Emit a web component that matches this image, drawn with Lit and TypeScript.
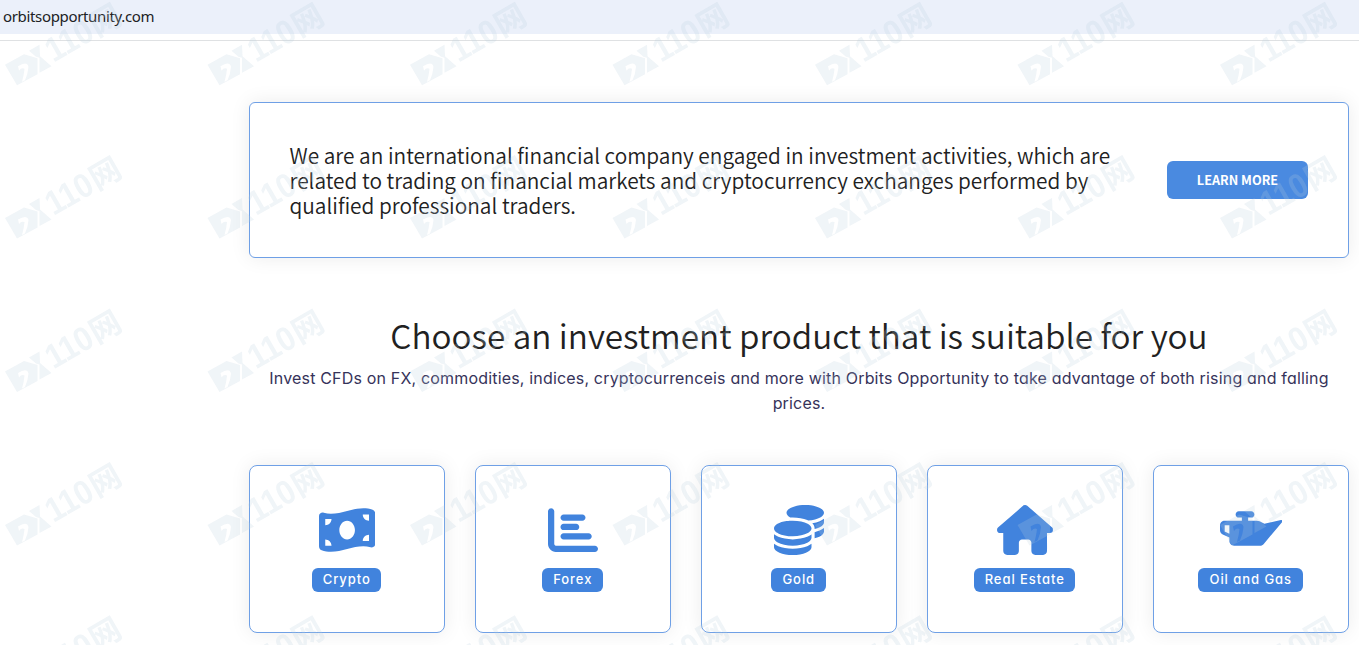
import { LitElement, css, html, svg } from 'lit';
import { customElement } from 'lit/decorators.js';

interface Product {
  label: string;
  width: number;
  path: string;
}

const products: Product[] = [
  {
    label: 'Crypto',
    width: 576,
    path: 'M0 112.5V422.3c0 18 10.1 35 27 41.3c87 32.5 174 10.3 261-11.9c79.8-20.3 159.6-40.7 239.3-18.9c23 6.3 48.7-9.5 48.7-33.4V89.7c0-18-10.1-35-27-41.3C462 15.9 375 38.1 288 60.3C208.2 80.6 128.4 100.9 48.7 79.1C25.6 72.8 0 88.6 0 112.5zM288 352c-44.2 0-80-43-80-96s35.8-96 80-96s80 43 80 96s-35.8 96-80 96zM64 352c35.3 0 64 28.7 64 64H64V352zm64-208c0 35.3-28.7 64-64 64V144h64zM512 304v64H448c0-35.3 28.7-64 64-64zM448 96h64v64c-35.3 0-64-28.7-64-64z',
  },
  {
    label: 'Forex',
    width: 512,
    path: 'M32 32c17.7 0 32 14.3 32 32V400c0 8.8 7.2 16 16 16H480c17.7 0 32 14.3 32 32s-14.3 32-32 32H80c-44.2 0-80-35.8-80-80V64C0 46.3 14.3 32 32 32zm96 96c0-17.7 14.3-32 32-32H352c17.7 0 32 14.3 32 32s-14.3 32-32 32H160c-17.7 0-32-14.3-32-32zm32 64H288c17.7 0 32 14.3 32 32s-14.3 32-32 32H160c-17.7 0-32-14.3-32-32s14.3-32 32-32zm0 96H416c17.7 0 32 14.3 32 32s-14.3 32-32 32H160c-17.7 0-32-14.3-32-32s14.3-32 32-32z',
  },
  {
    label: 'Gold',
    width: 512,
    path: 'M512 80c0 18-14.3 34.6-38.4 48c-29.1 16.1-72.5 27.5-122.3 30.9c-3.7-1.8-7.4-3.5-11.3-5C300.6 137.4 248.2 128 192 128c-8.3 0-16.4 .2-24.5 .6l-1.1-.6C142.3 114.6 128 98 128 80c0-44.2 86-80 192-80S512 35.8 512 80zM160.7 161.1c10.2-.7 20.7-1.1 31.3-1.1c62.2 0 117.4 12.3 152.5 31.4C369.3 204.9 384 221.7 384 240c0 4-.7 7.9-2.1 11.7c-4.6 13.2-17 25.3-35 35.5c-.4 .2-.9 .5-1.3 .7c-35 19.4-90.8 32-153.6 32c-59.6 0-112.9-11.3-148.2-29.1c-1.9-.9-3.7-1.9-5.5-2.9C14.3 274.6 0 258 0 240c0-34.8 53.4-64.5 128-75.4c10.5-1.5 21.4-2.7 32.7-3.5zM416 240c0-21.9-10.6-39.9-24.1-53.4c28.3-4.4 54.2-11.4 76.2-20.5c16.3-6.8 31.5-15.2 43.9-25.5V176c0 19.3-16.5 37.1-43.8 50.9c-14.6 7.4-32.4 13.7-52.4 18.5c.1-1.8 .2-3.5 .2-5.3zm-32 96c0 18-14.3 34.6-38.4 48c-1.8 1-3.6 1.9-5.5 2.9C304.9 404.7 251.6 416 192 416c-62.8 0-118.6-12.6-153.6-32C14.3 370.6 0 354 0 336V300.6c12.5 10.3 27.6 18.7 43.9 25.5C83.4 342.6 135.8 352 192 352s108.6-9.4 148.1-25.9c7.8-3.2 15.3-6.9 22.4-10.9c6.1-3.4 11.8-7.2 17.2-11.2c1.5-1.1 2.9-2.3 4.3-3.4V336zm32 0V278.1c19-4.2 36.5-9.5 52.1-16c16.3-6.8 31.5-15.2 43.9-25.5V272c0 10.5-5 21-14.9 30.9c-16.3 16.3-45 29.7-81.3 38.4c.1-1.7 .2-3.5 .2-5.3zM192 448c56.2 0 108.6-9.4 148.1-25.9c16.3-6.8 31.5-15.2 43.9-25.5V432c0 44.2-86 80-192 80S0 476.2 0 432V396.6c12.5 10.3 27.6 18.7 43.9 25.5C83.4 438.6 135.8 448 192 448z',
  },
  {
    label: 'Real Estate',
    width: 576,
    path: 'M575.8 255.5c0 18-15 32.1-32 32.1h-32l.7 160.2c0 2.7-.2 5.4-.5 8.1V472c0 22.1-17.9 40-40 40H392c-22.1 0-40-17.9-40-40V384c0-17.7-14.3-32-32-32H256c-17.7 0-32 14.3-32 32v88c0 22.1-17.9 40-40 40H104c-22.1 0-40-17.9-40-40V287.6H32c-18 0-32-14-32-32.1c0-9 3-17 10-24L266.4 8c7-7 15-8 22-8s15 2 21 7L564.8 231.5c8 7 12 15 11 24z',
  },
  {
    label: 'Oil and Gas',
    width: 640,
    path: 'M320 128c17.7 0 32-14.3 32-32s-14.3-32-32-32H192c-17.7 0-32 14.3-32 32s14.3 32 32 32h32v32H48c-26.5 0-48 21.5-48 48v50.7c0 19 11.2 36.2 28.5 43.9L96 332v36c0 26.5 21.5 48 48 48H410.5c14.5 0 28.3-6.6 37.4-17.9L636.6 174c9-11 1-22-12-19.8L454.9 190.8l-50-24.5c-8.9-4.4-18.7-6.3-28.6-6.3H288V128h32zM96 208v86.1L48 272.5V208h48z',
  },
];

const columns = [0, 1, 2, 3, 4, 5, 6];
const rows = [0, 1, 2, 3, 4];

@customElement('app-watermark')
export class AppWatermark extends LitElement {
  static styles = css`
    :host {
      display: block;
      inset: 0;
      pointer-events: none;
      position: absolute;
    }

    svg {
      display: block;
    }

    g {
      fill: rgb(184 205 220);
    }

    .sheet {
      opacity: 0.215;
    }

    .digits {
      font: 700 34px 'Liberation Sans', sans-serif;
    }

    .cjk {
      font: 700 31px 'Noto Sans CJK SC', sans-serif;
    }
  `;

  private mark(column: number, row: number) {
    return svg`
      <g transform="translate(${column * 202.5} ${row * 153.4 - 13.3})">
        <path
          d="M5 78 L24 67.5 L37.5 71.5 V87.5 L17 98.5 Z
            M18 79.5 Q27 74 28.5 80 Q28 87 25 93.5 L22 95 Q24 88 24.5 82 Q21.5 80.5 19 84 Z"
          fill-rule="evenodd"
        />
        <path d="M29 64 L39.5 58 L40 69.5 L51.5 79.5 L39.5 86 V71 L36 70 Z" />
        <g transform="translate(53.5 76) rotate(-30)">
          <text class="digits" transform="scale(0.9 1)">110</text>
          <text class="cjk" x="50.5" y="0">网</text>
        </g>
      </g>
    `;
  }

  render() {
    return html`
      <svg width="1359" height="645" viewBox="0 0 1359 645" aria-hidden="true">
        <g class="sheet">${rows.map((row) => columns.map((column) => this.mark(column, row)))}</g>
      </svg>
    `;
  }
}

@customElement('product-card')
export class ProductCard extends LitElement {
  static properties = {
    product: { attribute: false },
  };

  declare product: Product;

  static styles = css`
    :host {
      align-items: center;
      background: #fff;
      border: 1px solid #6fa0e6;
      border-radius: 8px;
      box-shadow: 0 0 20px rgb(0 0 0 / 8%);
      box-sizing: border-box;
      display: flex;
      flex-direction: column;
      gap: 13px;
      height: 168px;
      padding-top: 39px;
    }

    svg {
      display: block;
      fill: #4183dd;
      height: 50px;
    }

    .badge {
      background: #4183dd;
      border-radius: 6px;
      color: #fff;
      font: 500 13px/23px Inter, sans-serif;
      font-feature-settings: 'cv11';
      letter-spacing: 0.95px;
      margin-right: 1px;
      padding: 0 10.5px 1px 11px;
    }
  `;

  render() {
    return html`
      <svg viewBox="0 0 ${this.product.width} 512"><path d=${this.product.path} /></svg>
      <span class="badge">${this.product.label}</span>
    `;
  }
}

@customElement('app-root')
export class AppRoot extends LitElement {
  static styles = css`
    :host {
      background: #fff;
      display: block;
      height: 645px;
      overflow: hidden;
      position: relative;
    }

    .address {
      background: #ebf0fa;
      color: #202124;
      font: 15px/32px 'Noto Sans', sans-serif;
      height: 34px;
      letter-spacing: -0.34px;
      padding-left: 3px;
    }

    .rule {
      border-bottom: 1px solid #dfe1e3;
      height: 6px;
    }

    main {
      margin: 61px 10px 0 249px;
    }

    .banner {
      align-items: center;
      background: #fff;
      border: 1px solid #6fa0e6;
      border-radius: 6px;
      box-shadow: 0 0 20px rgb(0 0 0 / 8%);
      box-sizing: border-box;
      display: flex;
      height: 156px;
      justify-content: space-between;
      padding: 0 40px 0 39.5px;
    }

    .banner p {
      color: #212121;
      font: 350 20.83px/25px 'Noto Sans CJK SC', sans-serif;
      margin: 0;
      white-space: nowrap;
    }

    button {
      background: #4a8ae0;
      border: 0;
      border-radius: 6px;
      color: #fff;
      font: 700 12.7px/38px 'Noto Sans CJK SC', sans-serif;
      height: 38px;
      padding: 0;
      width: 141px;
    }

    h2 {
      color: #212121;
      font: 350 33.3px/44px 'Noto Sans CJK SC', sans-serif;
      margin: 55px 0 0;
      text-align: center;
      white-space: nowrap;
    }

    .lead {
      color: #36335a;
      font: 400 16px/25px Inter, sans-serif;
      font-feature-settings: 'cv11';
      letter-spacing: 0.175px;
      margin: 9px 0 0;
      text-align: center;
      white-space: nowrap;
    }

    .products {
      display: grid;
      gap: 30px;
      grid-template-columns: repeat(5, 1fr);
      margin-top: 49px;
    }
  `;

  render() {
    return html`
      <div class="address">orbitsopportunity.com</div>
      <div class="rule"></div>
      <main>
        <section class="banner">
          <p>
            We are an international financial company engaged in investment activities, which are<br />
            related to trading on financial markets and cryptocurrency exchanges performed by<br />
            qualified professional traders.
          </p>
          <button>LEARN MORE</button>
        </section>
        <h2>Choose an investment product that is suitable for you</h2>
        <p class="lead">
          Invest CFDs on FX, commodities, indices, cryptocurrenceis and more with Orbits Opportunity to take advantage of both rising and falling<br />
          prices.
        </p>
        <section class="products">
          ${products.map((product) => html`<product-card .product=${product}></product-card>`)}
        </section>
      </main>
      <app-watermark></app-watermark>
    `;
  }
}
